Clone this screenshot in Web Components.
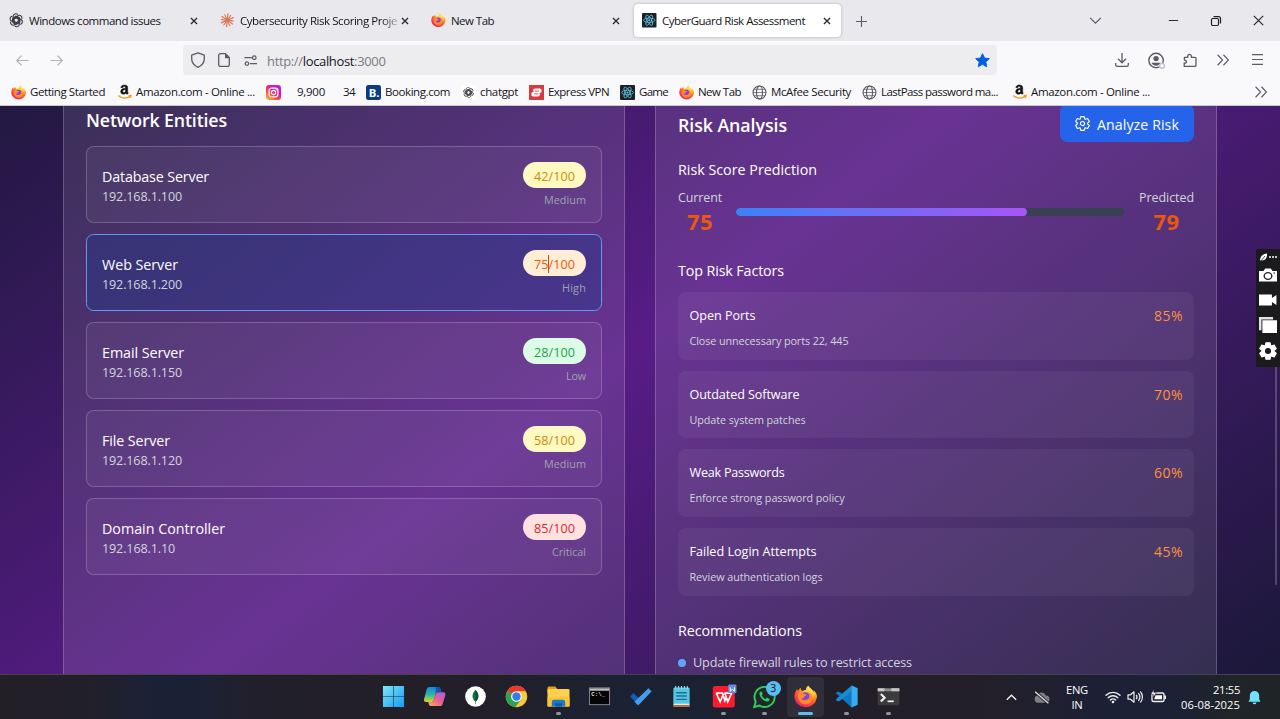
<!DOCTYPE html>
<html lang="en">
<head>
<meta charset="utf-8">
<title>CyberGuard Risk Assessment</title>
<style>
html,body{margin:0;padding:0;height:719px;overflow:hidden}
body{font-family:"Open Sans","Noto Sans",sans-serif;font-size:12px;color:#15141a}
</style>
</head>
<body>
<desk-top></desk-top>
<script>
const firefox = `<defs><radialGradient id="f" cx=".75" cy=".1" r="1"><stop offset="0" stop-color="#fff36b"/><stop offset=".35" stop-color="#ffbd2e"/><stop offset=".6" stop-color="#ff6a2b"/><stop offset="1" stop-color="#f0166b"/></radialGradient></defs><path d="M15.6 6.2c-.5-1.2-1.3-2-2-2.4.4.8.5 1.400.5 1.400C13 2.800 10.800 2.300 10 .3c-1.300.8-1.800 2.100-1.700 3.200C7 3.500 6.200 4 6 4.200 5 3.800 4.800 3 4.700 2 3.800 2.500 3.300 3.200 3 3.900 2.500 4 2.300 3.300 2.400 2.700 1.200 3.700.4 5.700.2 8a7.900 7.900 0 0 0 15.700.8c.2-.9.1-1.800-.3-2.600z" fill="url(#f)"/><circle cx="8" cy="8.600" r="3.500" fill="#8a3fe0"/><path d="M3.200 5.800c1.500-1 3.200-.3 3.700.5.700.2 1.700 0 1.800.5-.2.700-1.500 1.200-1.800 1.400.2.900-1 1.500-1.900 1 .6 1.400 2.400 1.800 4 1.100 2.400-1.200 2.200-4 .3-5.300 2.300.4 3.900 2.500 3.400 4.900-.9 3.300-4.200 4.200-6.700 3.200C3.300 11.900 2.200 8.900 3.200 5.800z" fill="#ff8b26"/>`;
const react = `<rect width="16" height="16" rx="1" fill="#1d2127"/><g fill="none" stroke="#5bc3dd" stroke-width=".9"><ellipse cx="8" cy="8" rx="6.300" ry="2.400"/><ellipse cx="8" cy="8" rx="6.300" ry="2.400" transform="rotate(60 8 8)"/><ellipse cx="8" cy="8" rx="6.300" ry="2.400" transform="rotate(120 8 8)"/></g><circle cx="8" cy="8" r="1.200" fill="#5bc3dd"/>`;
const openai = (c)=>`<g fill="none" stroke="${c}" stroke-width="1.250">${[0,60,120,180,240,300].map(a=>`<path transform="rotate(${a} 8 8)" d="M4.600 8.300V3.900A2.900 2.900 0 0 1 9.700 1.900M5.700 9.200V5.600L8.800 3.800 12 5.600"/>`).join('')}</g>`;
const amazon = `<path d="M9.700 8.400V6.200c-2.200 0-3 .6-3 1.700 0 .8.400 1.300 1.200 1.300.9 0 1.500-.4 1.800-.8zM11.900 10.900c-.8.300-1.500-.1-1.800-1-1.700 1.900-5.600 1.400-5.600-1.700 0-2.300 1.900-3.400 5.200-3.500 0-1.200-.3-1.800-1.400-1.800-.9 0-1.400.4-1.600 1.300l-2-.2C5 1.900 6.400 1.200 8.500 1.200c2.500 0 3.500 1 3.500 3.100v3.500c0 1 .1 1.400.7 1.900z" fill="#111" stroke="#111" stroke-width=".5" transform="translate(-.6 -1.200)"/><path d="M1.300 11.200c4 3.400 9.200 3.300 12.700 1M12.300 11.300l2.600-.1-.6 2.600" fill="none" stroke="#f79a1d" stroke-width="1.500"/>`;
const globe = `<g fill="none" stroke="#5b5b66" stroke-width="1.200"><circle cx="8" cy="8" r="6.900"/><ellipse cx="8" cy="8" rx="3.200" ry="6.900"/><path d="M1.200 8h13.600M2.200 4.600h11.600M2.200 11.400h11.600" stroke-width=".8"/></g>`;
const gearPath = (()=>{let d='';const n=6;for(let i=0;i<n;i++){const a=i*Math.PI/3-Math.PI/2;const p=(r,o)=>(8+r*Math.cos(a+o)).toFixed(2)+' '+(8+r*Math.sin(a+o)).toFixed(2);d+=(i?'L':'M')+p(5.400,-.46)+'L'+p(7.600,-.24)+'L'+p(7.600,.24)+'L'+p(5.400,.46);}return d+'Z';})();
const ICONS = {
 firefox, react, amazon, globe,
 openai: openai('#3b3b40'),
 chatgpt: `<rect width="16" height="16" rx="3" fill="#fff"/><g transform="translate(2 2) scale(.75)">${openai('#444')}</g>`,
 claude: `<g stroke="#d97757" stroke-width="1.300" stroke-linecap="round">${Array.from({length:12},(_,i)=>`<path transform="rotate(${i*30+6} 8 8)" d="M8 7V${i%2?1.5:.8}"/>`).join('')}</g><circle cx="8" cy="8" r="2" fill="#d97757"/>`,
 close: `<path d="M4.500 4.500l7 7m0-7l-7 7" stroke="#2b2a33" stroke-width="1.500"/>`,
 plus: `<path d="M8 2.200v11.600M2.200 8h11.600" stroke="#5b5b66" stroke-width="1.200"/>`,
 chev: `<path d="M2.300 5.200L8 10.800l5.700-5.600" fill="none" stroke="#5b5b66" stroke-width="1.300"/>`,
 min: `<path d="M3 8h10" stroke="#222" stroke-width="1"/>`,
 max: `<g fill="none" stroke="#222" stroke-width="1.200"><rect x="3.500" y="5.500" width="7" height="7" rx="1.200"/><path d="M5.500 3.600h5a2 2 0 0 1 2 2v5"/></g>`,
 winclose: `<path d="M3 3l10 10m0-10l-10 10" stroke="#222" stroke-width="1.200"/>`,
 back: `<path d="M14.500 8H2M7 2.800L1.800 8 7 13.200" fill="none" stroke="#b3b2ba" stroke-width="1.300"/>`,
 fwd: `<path d="M1.500 8H14M9 2.800L14.200 8 9 13.200" fill="none" stroke="#b3b2ba" stroke-width="1.300"/>`,
 shield: `<path d="M8 .9l6.300 2.300v3.600c0 4-2.700 6.900-6.300 8.500C4.400 13.700 1.700 10.800 1.700 6.800V3.200z" fill="none" stroke="#5b5b66" stroke-width="1.300" stroke-linejoin="round"/>`,
 page: `<path d="M9.500 1.700H4.300a1.600 1.600 0 0 0-1.600 1.600v9.500a1.600 1.600 0 0 0 1.600 1.600h7.400a1.600 1.600 0 0 0 1.600-1.600V5.500z" fill="none" stroke="#5b5b66" stroke-width="1.300"/><path d="M9 1.500v4.700h4.500z" fill="#5b5b66"/>`,
 perms: `<g fill="none" stroke="#5b5b66" stroke-width="1.300"><path d="M1.500 5h8M7.500 11.300H15"/><circle cx="12" cy="5" r="1.900"/><circle cx="4.200" cy="11.300" r="1.900"/></g>`,
 star: `<path d="M8 .7l2.200 4.700 5.100.6-3.800 3.500 1 5.200L8 12.100l-4.500 2.600 1-5.200L.7 6l5.100-.6z" fill="#0060df" stroke="#0060df" stroke-linejoin="round"/>`,
 download: `<path d="M8 1v9.500M4 6.800l4 4 4-4M1.700 11v1.800a1.600 1.600 0 0 0 1.600 1.600h9.400a1.600 1.600 0 0 0 1.600-1.600V11" fill="none" stroke="#5b5b66" stroke-width="1.300"/>`,
 account: `<circle cx="7.600" cy="8" r="6.800" fill="none" stroke="#5b5b66" stroke-width="1.300"/><circle cx="7.600" cy="6.200" r="2.500" fill="#5b5b66"/><path d="M3.300 10.200h8.600c-.6 1.700-2.300 2.700-4.300 2.700s-3.700-1-4.300-2.700z" fill="#5b5b66"/><circle cx="13.200" cy="13" r="2.300" fill="#f9f9fb" stroke="#c3c3ca" stroke-width="1.200"/>`,
 ext: `<path d="M2.200 14.300V11c2.700.8 3.200-3 .2-2.800V5.300h3.400c-1-3.800 4.200-4 3.600 0h3.400a1.200 1.200 0 0 1 1.200 1.200v6.600a1.200 1.200 0 0 1-1.200 1.200z" fill="none" stroke="#5b5b66" stroke-width="1.300" stroke-linejoin="round"/>`,
 more: `<path d="M1.800 2L7.500 8l-5.700 6M8.500 2L14.200 8l-5.700 6" fill="none" stroke="#5b5b66" stroke-width="1.300"/>`,
 menu: `<path d="M2.200 2.900h11.600M2.200 8h11.600M2.200 13.100h11.600" stroke="#5b5b66" stroke-width="1.300"/>`,
 insta: `<defs><linearGradient id="g" x1="0" y1="1" x2=".8" y2="0"><stop offset="0" stop-color="#ffc83d"/><stop offset=".35" stop-color="#ff5a2e"/><stop offset=".65" stop-color="#f0139a"/><stop offset="1" stop-color="#9b2de0"/></linearGradient></defs><rect width="16" height="16" rx="3.500" fill="url(#g)"/><g fill="none" stroke="#fff" stroke-width="1.300"><rect x="3.300" y="3.300" width="9.400" height="9.400" rx="2.800"/><circle cx="8" cy="8" r="2.300"/></g><circle cx="10.900" cy="5.100" r=".7" fill="#fff"/>`,
 booking: `<rect width="16" height="16" rx="2.500" fill="#0c3b80"/><text x="3" y="12.500" font-family="Open Sans" font-weight="700" font-size="12" fill="#fff">B.</text>`,
 vpn: `<rect width="16" height="16" fill="#da3940"/><g fill="#fff"><rect x="4.500" y="3.600" width="9" height="4.800" rx="2"/><rect x="2.500" y="7.400" width="9" height="4.800" rx="2"/></g><path d="M6 6.500h4.500M5.500 9.500H10" stroke="#da3940" stroke-width=".9"/>`,
 gearline: `<path d="${gearPath}" fill="none" stroke="currentColor" stroke-width="1.200" stroke-linejoin="round"/><circle cx="8" cy="8" r="2.200" fill="none" stroke="currentColor" stroke-width="1.200"/>`,
 gear: `<path d="${gearPath}" fill="#fff" stroke="#fff" stroke-linejoin="round"/><circle cx="8" cy="8" r="2.700" fill="#1b1b1d"/>`,
 camera: `<path d="M0 4h4l1.500-2.500h5L12 4h4v10.500H0z" fill="#fff"/><circle cx="8" cy="9" r="3.400" fill="none" stroke="#222" stroke-width="1.200"/><circle cx="13.500" cy="6" r=".7" fill="#222"/>`,
 video: `<path d="M0 2.500h11.500v3.600l4-3v9.800l-4-3v3.600H0z" fill="#fff"/>`,
 stack: `<path d="M0 1h12.500v2.200H2.200v10.300H0z" fill="#e2e2e2"/><rect x="3" y="4" width="13" height="12" fill="#fff"/>`,
 feather: `<path d="M1 8.500c0-4 3-7 7-7C8.500 5 6.500 8.500 3 8.500z" fill="#fff"/><path d="M1 10l5-6" stroke="#222" stroke-width=".8"/><circle cx="11" cy="5" r="1" fill="#fff"/><circle cx="14" cy="5" r="1" fill="#fff"/><circle cx="17" cy="5" r="1" fill="#fff"/>`,
 windows: `<defs><linearGradient id="w" x1="0" y1="0" x2="1" y2="1"><stop offset="0" stop-color="#7fe6fb"/><stop offset="1" stop-color="#159bf0"/></linearGradient></defs><path d="M1 1h10.700v10.700H1zM12.300 1H23v10.700H12.300zM1 12.300h10.700V23H1zM12.300 12.300H23V23H12.300z" fill="url(#w)"/>`,
 copilot: `<defs><linearGradient id="a" x1="0" y1="0" x2="0" y2="1"><stop offset="0" stop-color="#1588dc"/><stop offset=".5" stop-color="#2cb5a8"/><stop offset="1" stop-color="#e5cf22"/></linearGradient><linearGradient id="b" x1="1" y1="0" x2="0" y2="1"><stop offset="0" stop-color="#a45ce8"/><stop offset=".5" stop-color="#ec5f93"/><stop offset="1" stop-color="#ffad55"/></linearGradient></defs><g transform="translate(-.8 -1.200) scale(1.080)"><path d="M7 3h8.200c1.500 0 2 .9 2.500 2.300L18.500 8h-3c-1.500 0-2.200.7-2.600 2l-1.700 5.500c-.5 1.500-1.200 2-2.500 2H4C1.700 17.500 1.300 16 2 13.800L4.200 5.600C4.700 4 5.500 3 7 3z" fill="url(#a)"/><path d="M17 21.500H8.700c-1.500 0-2-1-2.400-2.300l-.5-1.700h2.900c1.300 0 2-.6 2.500-2L13 10c.4-1.300 1.100-2 2.600-2h4.500c2.300 0 2.700 1.500 2 3.700l-2.300 7.500c-.5 1.500-1.300 2.300-2.800 2.300z" fill="url(#b)"/><path d="M13 3h2.500c1.500 0 2 1 2.400 2.500L18.500 8h-3c-1.400 0-2 .5-2.500 2z" fill="#1753ba"/></g>`,
 mongo: `<circle cx="12" cy="12" r="10.800" fill="#fff"/><path d="M12 5c4.500 4.500 3.600 9.600.3 12.300V20h-.6v-2.700C8.400 14.600 7.500 9.500 12 5z" fill="#11734b"/><path d="M12 5v12.500c3.500-3 4.300-7.900 0-12.500z" fill="#0a5539"/>`,
 chrome: `<circle cx="12" cy="12" r="11.200" fill="#fcc934"/><path d="M12 12L2.300 6.400A11.200 11.200 0 0 0 10.700 23.100L17 14.900z" fill="#30a350"/><path d="M12 12L2.300 6.400A11.200 11.200 0 0 1 21.700 6.400H12z" fill="#e33b2e"/><circle cx="12" cy="12" r="5.600" fill="#fff"/><circle cx="12" cy="12" r="4.400" fill="#2f7df0"/>`,
 folder: `<path d="M.5 3.500C.5 2.700 1 1.500 2 1.500h6.500l2.200 2.500V8H.5z" fill="#e0a116"/><rect x=".5" y="4.200" width="23" height="18.300" rx="1.200" fill="#ffd04d"/><path d="M.5 13h23v9.500H.5z" fill="#fbc32f"/><path d="M5 22.500v-4.500a2.500 2.500 0 0 1 2.500-2.500h9a2.500 2.500 0 0 1 2.500 2.500v4.500z" fill="#1a7ad0"/><path d="M8.500 19h7v3.500h-7z" fill="#0a5aa5"/>`,
 cmd: `<rect x="1.500" y="3" width="21" height="17.500" fill="#050505" stroke="#8a8a8a"/><path d="M2 3.500h20V6H2z" fill="#b9bcc0"/><text x="3.500" y="11.500" font-family="Liberation Mono" font-size="6" font-weight="700" fill="#ddd">C:\\_</text>`,
 todo: `<path d="M1.600 11.500L4.700 8.300l7.600 7.500-3 3a1 1 0 0 1-1.400 0L1.600 12.800z" fill="#185abd"/><path d="M20.300 3.500l3.200 3.200-13.200 13.900a1.200 1.200 0 0 1-1.700 0l-2.900-3z" fill="#459df0"/>`,
 notepad: `<rect x="3.500" y="2.500" width="17" height="20" rx="1.500" fill="#58c5e2"/><path d="M3.500 20.500h17v2.500h-17z" fill="#b96d34"/><path d="M4 19.500h16v1.300H4z" fill="#eee"/><path d="M6.500 8h11M6.500 11.500h11M6.500 15h11" stroke="#167493" stroke-width="1.500"/><path d="M6 1v3M9 1v3M12 1v3M15 1v3M18 1v3" stroke="#aef0fa" stroke-width="1"/>`,
 wps: `<rect x=".8" y="1" width="23" height="22.500" rx="2.500" fill="#f81c2e"/><path d="M4.500 8.500h6.500l2.500 8L15 12.500M4.500 8.500l4 9 3.700-8.500M13 8.500H20.500l-4 9-3-9" fill="none" stroke="#fff" stroke-width="1.700"/><rect x="17" y="-.5" width="8.500" height="9" rx="1" fill="#648be8"/><path d="M19 2.500v4l2.200-2 2.300 2v-4" fill="none" stroke="#fff"/>`,
 whatsapp: `<path d="M1.300 23l1.500-5.700A10.500 10.500 0 1 1 6.800 21.500z" fill="#202a2a" stroke="#2fca62" stroke-width="2"/><path d="M8 7c-1 .5-1.600 1.700-1.200 3 1 3.600 3.600 6.300 7.300 7.200 1.400.3 2.700-.4 3.100-1.600l.2-1-3-1.500-1.300 1.500c-2-.8-3.200-2-4-3.800l1.100-1.200L9 6.800z" fill="#2fca62"/>`,
 vscode: `<path d="M17.300 .5L23.500 3.400v17.200L17.300 23.500 2.600 9.900 1 9.200 1.200 8.200 2.800 7 4.800 7.200 10.800 11.800z" fill="#1279c0"/><path d="M17.300.5v6.500L4.800 16.800 2.800 17 1.200 15.800 1 14.800z" fill="#178bd3"/><path d="M17.300.5L23.500 3.400v17.200L17.300 23.500z" fill="#3babf0"/>`,
 terminal: `<rect x=".8" y="3.500" width="22.500" height="17.500" rx="1" fill="#3b3b3d"/><path d="M.8 3.500h22.500v3H.8z" fill="#8d8d8d"/><path d="M.8 3.500h7v3h-7zM15 3.500h8.300v3H15z" fill="#c6c6c6"/><path d="M4 9.500l4 3.800-4 3.800" fill="none" stroke="#eee" stroke-width="2.200"/><path d="M11 17h6.500" stroke="#eee" stroke-width="1.800"/>`,
 up: `<path d="M3 10.500l5-5 5 5" fill="none" stroke="#eee" stroke-width="1.500"/>`,
 cloud: `<path d="M4.500 13a3.500 3.500 0 0 1-.5-6.800A4.300 4.300 0 0 1 12 6a3.500 3.500 0 0 1 0 7z" fill="#7e7f86"/><path d="M2 2.500l12.500 11" stroke="#24222b" stroke-width="3"/><path d="M2 2.500l12.500 11" stroke="#e4e4e4" stroke-width="1.200"/>`,
 wifi: `<g fill="none" stroke="#eee" stroke-width="1.400" stroke-linecap="round"><path d="M1 6.200a10 10 0 0 1 14 0M3.200 8.700a6.900 6.900 0 0 1 9.600 0M5.400 11.100a3.800 3.800 0 0 1 5.200 0"/></g><circle cx="8" cy="13" r="1.300" fill="#eee"/>`,
 sound: `<g fill="none" stroke="#eee" stroke-width="1.200" stroke-linejoin="round"><path d="M1 5.800h2.500L7 2.800v10.400L3.500 10.200H1zM9.200 5.800c1 1.300 1 3.100 0 4.400M11.300 4.200c1.900 2.200 1.900 5.400 0 7.600M13.300 2.500c2.800 3 2.800 8 0 11"/></g>`,
 battery: `<rect x="2" y="4" width="12" height="8.500" rx="1.500" fill="none" stroke="#eee" stroke-width="1.400"/><path d="M5.500 6.300h6.500v3.900H4.200zM14.500 6.500H16v3.500h-1.500z" fill="#fff"/><path d="M.8 5.300L3.800.5v3h2.700L3.200 8.500V5.300z" fill="#fff" stroke="#24222b" stroke-width=".6"/>`,
 bell: `<path d="M8 1a5 5 0 0 1 5 5v4l1.500 2.500h-13L3 10V6a5 5 0 0 1 5-5zM6 13.300h4a2 2 0 0 1-4 0z" fill="#73e0ff"/>`
};

const define = (name, html, setup) => customElements.define(name, class extends HTMLElement {
  constructor(){ super(); this.attachShadow({mode:'open'}); }
  connectedCallback(){
    if (this.ready) return; this.ready = true;
    this.shadowRoot.innerHTML = typeof html === 'function' ? html(this, n => this.getAttribute(n) || '') : html;
    if (setup) setup(this);
  }
});

/* svg icon: name, s (width), h (height) */
define('ui-icon', (el,a)=>{
  const big=['windows','copilot','mongo','chrome','folder','cmd','todo','notepad','wps','whatsapp','vscode','terminal'].includes(a('name'));
  const box = a('name')==='feather' ? '0 0 18 10' : big ? '0 0 24 24' : '0 0 16 16';
  return `<style>:host{display:block;flex:none;line-height:0}svg{display:block;overflow:visible}</style><svg width="${a('s')||16}" height="${a('h')||a('s')||16}" viewBox="${box}" preserveAspectRatio="none">${ICONS[a('name')]}</svg>`;
});

/* one line of text whose tracking is tuned so that it spans w pixels */
define('fit-text', `<style>:host{display:block;flex:none;white-space:pre}span{display:inline-block}</style><span><slot></slot></span>`, el=>{
  const w=parseFloat(el.getAttribute('w')); if(!w) return;
  const span=el.shadowRoot.querySelector('span'), n=el.textContent.length;
  const nat=span.getBoundingClientRect().width;
  span.style.letterSpacing=((w-nat)/n).toFixed(3)+'px';
  el.style.width=w+'px';
});

define('browser-tab', (el,a)=>`<style>
:host{display:flex;align-items:center;box-sizing:border-box;height:33px;width:207px;flex:none;border-radius:4px;padding:0 7px 0 8px;font-size:11.500px}
:host([active]){background:#fff;box-shadow:0 0 3px rgba(0,0,0,.28)}
.t{flex:1;min-width:0;margin:1px 0 0 5.500px;line-height:20px}
:host([fade]) .t{-webkit-mask-image:linear-gradient(90deg,#000 142px,rgba(0,0,0,.25) 158px)}
</style><ui-icon name="${a('icon')}" s="14.500"></ui-icon><div class="t"><fit-text w="${a('w')}">${a('label')}</fit-text></div><ui-icon name="close" s="14"></ui-icon>`);

define('tab-strip', `<style>
:host{display:flex;height:41px;background:#e9e9ed;align-items:center;box-sizing:border-box;padding-left:1px}
browser-tab{margin-right:4px}.sp{flex:1}
ui-icon{margin-right:27px}
</style>
<browser-tab icon="openai" label="Windows command issues" w="131.500"></browser-tab>
<browser-tab icon="claude" label="Cybersecurity Risk Scoring Proje" w="157" fade></browser-tab>
<browser-tab icon="firefox" label="New Tab" w="43"></browser-tab>
<browser-tab icon="react" label="CyberGuard Risk Assessment" w="143" active></browser-tab>
<ui-icon name="plus" s="15" style="margin-left:9px;margin-top:1px"></ui-icon><div class="sp"></div>
<ui-icon name="chev" s="15" style="margin-right:63px"></ui-icon><ui-icon name="min" s="15"></ui-icon><ui-icon name="max" s="16"></ui-icon><ui-icon name="winclose" s="15" style="margin-right:14px"></ui-icon>`);

define('nav-bar', `<style>
:host{display:flex;align-items:center;height:38px;box-sizing:border-box;padding:0 15px;background:#f9f9fb}
.url{display:flex;align-items:center;width:814px;height:30px;border-radius:4px;background:#ededf0;box-sizing:border-box;padding:0 7px;font-size:13px;color:#7a7a82;margin-left:119px}
b{font-weight:400;color:#15141a}.sp{flex:1}
.r{display:flex;gap:18px;margin-right:0}
</style><ui-icon name="back" s="15"></ui-icon><ui-icon name="fwd" s="15" style="margin-left:19px"></ui-icon>
<div class="url"><ui-icon name="shield" s="16"></ui-icon><ui-icon name="page" s="16" style="margin-left:10px"></ui-icon><ui-icon name="perms" s="15" style="margin-left:11px"></ui-icon><fit-text w="118.500" style="margin:1px 0 0 9px">http://<b>localhost</b>:3000</fit-text><div class="sp"></div><ui-icon name="star" s="15"></ui-icon></div>
<div class="sp"></div><div class="r"><ui-icon name="download" s="16"></ui-icon><ui-icon name="account" s="17"></ui-icon><ui-icon name="ext" s="16" style="margin-left:-1px"></ui-icon><ui-icon name="more" s="14" style="margin:1px 0 0"></ui-icon><ui-icon name="menu" s="15" style="margin-left:2px"></ui-icon></div>`);

define('book-mark', (el,a)=>`<style>:host{display:flex;align-items:center;flex:none;width:${a('pitch')}px;font-size:11.500px;line-height:20px}ui-icon{margin-right:4px}</style>${a('icon')?`<ui-icon name="${a('icon')}" s="15"></ui-icon>`:''}${a('label')?`<fit-text w="${a('w')}">${a('label')}</fit-text>`:''}`);

define('bookmark-bar', `<style>:host{display:flex;align-items:center;height:26px;background:#f9f9fb;padding:0 12px 0 11px;border-bottom:1px solid #c9c8d0}.sp{flex:1}</style>
${[['firefox','Getting Started',75,106],['amazon','Amazon.com - Online ...',119,149],['insta','',0,31],['','9,900',28,46],['','34',12,23],['booking','Booking.com',65,95],['chatgpt','chatgpt',38,68],['vpn','Express VPN',61,91],['react','Game',29,59],['firefox','New Tab',43,73],['globe','McAfee Security',80,110],['globe','LastPass password ma...',117,150],['amazon','Amazon.com - Online ...',119,140]].map(b=>`<book-mark icon="${b[0]}" label="${b[1]}" w="${b[2]}" pitch="${b[3]}"></book-mark>`).join('')}
<div class="sp"></div><ui-icon name="more" s="14"></ui-icon>`);

define('glass-panel', `<style>:host{display:block;box-sizing:border-box;width:562px;height:700px;border:1px solid rgba(255,255,255,.2);background:rgba(255,255,255,.1);padding:0 22px;margin-top:-20px;padding-top:19px}</style><slot></slot>`);

define('entity-card', (el,a)=>{
  const c={Medium:['#fef9c3','#ca8a04'],High:['#ffedd5','#ea580c'],Low:['#dcfce7','#16a34a'],Critical:['#fee2e2','#dc2626']}[a('level')];
  return `<style>
:host{display:flex;justify-content:space-between;box-sizing:border-box;height:77px;margin-bottom:11px;border:1px solid rgba(255,255,255,.2);border-radius:7.500px;background:rgba(255,255,255,.05);padding:0 15px}
:host([selected]){border-color:#6299ee;background:rgba(32,58,142,.38)}
.l{padding-top:19px}.n{font-size:14.300px;line-height:21px;color:#fff}.i{font-size:12.600px;line-height:20px;color:#d1d5db}
.r{display:flex;flex-direction:column;align-items:flex-end;padding-top:15px}
.p{display:flex;align-items:center;justify-content:center;box-sizing:border-box;padding-top:2px;width:63px;height:26px;border-radius:13px;background:${c[0]};color:${c[1]};font-size:12.600px;position:relative}
.c{position:absolute;left:25px;top:5px;width:1px;height:18px;background:#c8501c}
.v{font-size:10.800px;line-height:18px;color:#9ca3af;margin-top:3px}
</style><div class="l"><fit-text class="n" w="${a('nw')}">${a('name')}</fit-text><fit-text class="i" w="${a('iw')}">${a('ip')}</fit-text></div>
<div class="r"><div class="p"><fit-text w="41">${a('score')}/100</fit-text>${a('level')==='High'?'<i class="c"></i>':''}</div><fit-text class="v" w="${a('lw')}">${a('level')}</fit-text></div>`;});

define('risk-factor', (el,a)=>`<style>:host{display:block;box-sizing:border-box;height:67.500px;margin-bottom:11.200px;border-radius:7.500px;background:rgba(255,255,255,.05);padding:13px 11px 0 11.500px}
.t{display:flex;justify-content:space-between;line-height:21px;font-size:12.600px;color:#fff}.p{color:#fb923c;font-size:14px}.d{font-size:10.800px;color:#d1d5db;line-height:18px;margin-top:6px}</style>
<div class="t"><fit-text w="${a('nw')}" style="font-weight:450">${a('name')}</fit-text><fit-text class="p" w="29">${a('pct')}</fit-text></div><fit-text class="d" w="${a('dw')}">${a('desc')}</fit-text>`);

define('score-meter', `<style>:host{display:flex;height:48px;color:#d1d5db;font-size:12.500px}
.s{display:flex;flex-direction:column;align-items:center}.s fit-text{line-height:19px}.s .b{font-size:22px;font-weight:700;color:#ea580c;line-height:28px}
.m{flex:1;margin:20px 15px 0 14px;height:7.500px;border-radius:4px;background:#374151;overflow:hidden}.f{height:100%;width:75%;border-radius:4px;background:linear-gradient(90deg,#3b82f6,#a855f7)}</style>
<div class="s"><fit-text w="44">Current</fit-text><fit-text class="b" w="26">75</fit-text></div><div class="m"><div class="f"></div></div><div class="s"><fit-text w="55">Predicted</fit-text><fit-text class="b" w="26">79</fit-text></div>`);

define('risk-app', `<style>
:host{display:flex;gap:30px;position:relative;box-sizing:border-box;height:568px;overflow:hidden;padding:0 63px;background:linear-gradient(to bottom right,#0f172a,#581c87,#0f172a) 0 -241px/1280px 959px no-repeat;color:#fff}
h2{margin:0;font-size:17.800px;font-weight:600}h3{margin:0;font-size:14.300px;font-weight:400;line-height:22px}
.l h2{line-height:26px;margin-bottom:13px;padding-top:1px}
.top{display:flex;justify-content:space-between;align-items:center;height:38px;margin-bottom:17px;margin-top:-2px}
.top h2{padding-top:4px}
button{all:unset;display:flex;align-items:center;box-sizing:border-box;width:134px;height:38px;border-radius:7.500px;background:#2563eb;padding:2px 15px 0;font-size:14.200px;gap:7px}
button ui-icon{margin-top:-2px}
score-meter{margin:7px 0 24px}
.li{display:flex;align-items:center;font-size:12.700px;line-height:20px;color:#d1d5db;gap:7px;margin-top:10px}.dot{width:8px;height:8px;border-radius:50%;background:#60a5fa;margin-top:2px}
.bar{position:absolute;left:1275px;top:143px;width:2px;height:336px;border-radius:1px;background:rgba(150,140,175,.4)}
</style>
<glass-panel class="l"><div class="l"><h2><fit-text w="141">Network Entities</fit-text></h2>
<entity-card name="Database Server" nw="107" ip="192.168.1.100" iw="80" score="42" level="Medium" lw="42"></entity-card>
<entity-card name="Web Server" nw="76" ip="192.168.1.200" iw="80" score="75" level="High" lw="24" selected></entity-card>
<entity-card name="Email Server" nw="82" ip="192.168.1.150" iw="80" score="28" level="Low" lw="20"></entity-card>
<entity-card name="File Server" nw="68" ip="192.168.1.120" iw="80" score="58" level="Medium" lw="42"></entity-card>
<entity-card name="Domain Controller" nw="123" ip="192.168.1.10" iw="73" score="85" level="Critical" lw="34"></entity-card></div></glass-panel>
<glass-panel><div class="top"><h2><fit-text w="109">Risk Analysis</fit-text></h2><button><ui-icon name="gearline" s="15"></ui-icon><fit-text w="82">Analyze Risk</fit-text></button></div>
<h3><fit-text w="139">Risk Score Prediction</fit-text></h3>
<score-meter></score-meter>
<h3 style="margin-bottom:10px"><fit-text w="106">Top Risk Factors</fit-text></h3>
<risk-factor name="Open Ports" nw="66" pct="85%" desc="Close unnecessary ports 22, 445" dw="159"></risk-factor>
<risk-factor name="Outdated Software" nw="110" pct="70%" desc="Update system patches" dw="116"></risk-factor>
<risk-factor name="Weak Passwords" nw="95" pct="60%" desc="Enforce strong password policy" dw="155"></risk-factor>
<risk-factor name="Failed Login Attempts" nw="127" pct="45%" desc="Review authentication logs" dw="133"></risk-factor>
<h3 style="margin-top:24px"><fit-text w="124">Recommendations</fit-text></h3>
<div class="li"><i class="dot"></i><fit-text w="219">Update firewall rules to restrict access</fit-text></div></glass-panel>
<div class="bar"></div>`);

define('capture-tool', `<style>:host{position:absolute;left:1256px;top:249px;width:24px;height:118px;box-sizing:border-box;background:#1b1b1d;border-radius:2px 0 0 2px;display:flex;flex-direction:column;align-items:center;padding-top:3px}</style>
<ui-icon name="feather" s="18" h="10"></ui-icon><ui-icon name="camera" s="18" h="16" style="margin-top:5px"></ui-icon><ui-icon name="video" s="18" h="16" style="margin-top:9px"></ui-icon><ui-icon name="stack" s="18" h="17" style="margin-top:8px"></ui-icon><ui-icon name="gear" s="18" style="margin-top:9px"></ui-icon>`);

define('task-item', (el,a)=>`<style>:host{display:flex;flex:none;flex-direction:column;align-items:center;box-sizing:border-box;width:37.250px;height:40px;margin:0 2px;padding-top:8px;border-radius:4px;position:relative}
:host([active]){background:#302e38}
.u{width:5px;height:3px;border-radius:2px;background:#94949a;margin-top:auto;margin-bottom:2px}:host([active]) .u{width:15px;background:#5bc0f0}
.n{position:absolute;left:20px;top:4px;width:15px;height:15px;border-radius:8px;background:#57bdf3;color:#111;font-size:10.500px;line-height:15px;text-align:center}</style>
<ui-icon name="${a('icon')}" s="23"></ui-icon>${a('run')?'<i class="u"></i>':''}${a('badge')?`<span class="n">${a('badge')}</span>`:''}`);

define('task-bar', `<style>:host{display:flex;box-sizing:border-box;height:45px;border-top:1px solid #47424e;background:linear-gradient(90deg,#231f26 0,#211f2a 90px,#1b2135 150px,#1b2134 200px,#211f2b 250px,#231f28 480px,#1a2233 620px,#1a2232 690px,#231f29 800px,#231f29 980px,#1b2036 1120px,#1c2134 1180px,#1f2528 1230px,#1f2427);padding-left:372.400px;color:#fff;align-items:center}
.apps{display:flex;align-self:flex-start;padding-top:2px}.sp{flex:1}
.lang,.time{font-size:11.200px;line-height:15px;display:flex;flex-direction:column}.lang{align-items:center;width:24px}.time{align-items:flex-end;width:60px}</style>
<div class="apps">${[['windows'],['copilot'],['mongo'],['chrome'],['folder',1],['cmd'],['todo'],['notepad'],['wps',1],['whatsapp',1,3],['firefox',1,0,1],['vscode',1],['terminal',1]].map(t=>`<task-item icon="${t[0]}" ${t[1]?'run="1"':''} ${t[2]?`badge="${t[2]}"`:''} ${t[3]?'active':''}></task-item>`).join('')}</div>
<div class="sp"></div>
<ui-icon name="up" s="15"></ui-icon><ui-icon name="cloud" s="17" style="margin-left:14px"></ui-icon>
<div class="lang" style="margin-left:15px"><fit-text w="22">ENG</fit-text><fit-text w="11">IN</fit-text></div>
<ui-icon name="wifi" s="16" style="margin-left:16px"></ui-icon><ui-icon name="sound" s="16" style="margin-left:6px"></ui-icon><ui-icon name="battery" s="16" style="margin-left:7px"></ui-icon>
<div class="time" style="margin-left:14px"><fit-text w="27">21:55</fit-text><fit-text w="59">06-08-2025</fit-text></div><ui-icon name="bell" s="15" style="margin:0 18px 0 7px"></ui-icon>`);

define('desk-top', `<style>:host{display:block;position:relative;width:1280px;height:719px;overflow:hidden}</style><tab-strip></tab-strip><nav-bar></nav-bar><bookmark-bar></bookmark-bar><risk-app></risk-app><task-bar></task-bar><capture-tool></capture-tool>`);
</script>
</body>
</html>
